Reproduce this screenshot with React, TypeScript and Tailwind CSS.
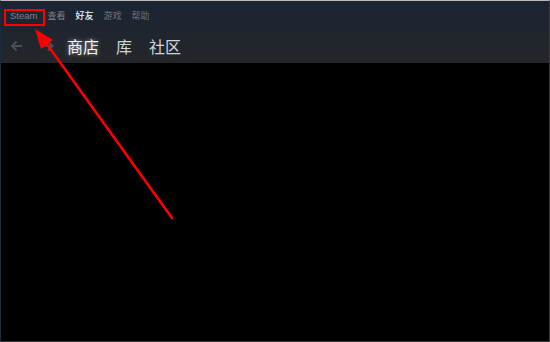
import React from "react";

const cjk = { fontFamily: '"Noto Sans CJK SC", "Noto Sans", sans-serif' };

export default function App() {
  return (
    <div className="relative w-[550px] h-[342px] bg-black overflow-hidden border-t border-t-[#b9b9b9] border-l border-l-[#1d2a3b] border-r border-r-[#3b3b3b] border-b border-b-[#3b3b3b] flex flex-col">
      <div className="h-[62px] bg-linear-to-b from-[#1b2434] to-[#242629] flex flex-col">
        <div className="h-[30px] flex items-center pl-[9px] gap-[10px] text-[9px]" style={cjk}>
          <span className="text-[#7d838b]" style={{ fontFamily: '"Liberation Sans", Arial, sans-serif', fontSize: "9.5px" }}>Steam</span>
          <span className="text-[#7d838b]">查看</span>
          <span className="text-[#d6d8da] font-bold">好友</span>
          <span className="text-[#6e747b]">游戏</span>
          <span className="text-[#6e747b]">帮助</span>
        </div>
        <div className="h-[29px] flex items-center pl-[9px]" style={cjk}>
          <svg width="13" height="12" viewBox="0 0 13 12" fill="none" stroke="#4a4f56" strokeWidth="2">
            <path d="M12 6H2M6.5 1.5L2 6l4.5 4.5" />
          </svg>
          <svg className="ml-[20px]" width="11" height="12" viewBox="0 0 11 12" fill="none" stroke="#4a4f56" strokeWidth="2">
            <path d="M0 6h9M5 1.5L9.5 6 5 10.5" />
          </svg>
          <span className="ml-[13px] text-[16px] leading-none text-[#f2f2f2] [text-shadow:0_0_4px_rgba(255,255,255,0.55)]">商店</span>
          <span className="ml-[17px] text-[16px] leading-none text-[#d3d6d9]">库</span>
          <span className="ml-[17px] text-[16px] leading-none text-[#d3d6d9]">社区</span>
        </div>
      </div>
      <div className="flex-1 bg-black" />

      <div className="absolute left-[3px] top-[8px] w-[41px] h-[17px] border-2 border-[#ff0000]" />

      <svg className="absolute left-[-1px] top-[-1px]" width="550" height="342" viewBox="0 0 550 342">
        <line x1="172" y1="218" x2="44" y2="40" stroke="#ff0000" strokeWidth="2.6" strokeLinecap="round" />
        <polygon points="35,29 53,40 41,49" fill="#ff0000" />
      </svg>
    </div>
  );
}
